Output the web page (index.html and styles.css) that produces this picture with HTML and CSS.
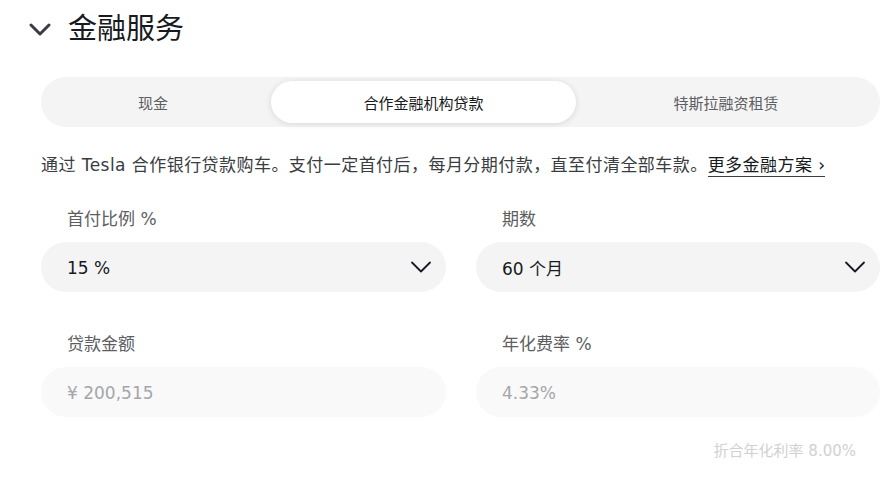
FILE: index.html
```html
<!DOCTYPE html>
<html lang="zh-CN">
<head>
<meta charset="utf-8">
<title>金融服务</title>
<link rel="stylesheet" href="styles.css">
</head>
<body>
<div class="page">
  <header class="head">
    <svg class="head-chev" width="22" height="13" viewBox="0 0 22 13"><path d="M2 2 L11 11 L20 2" fill="none" stroke="#393c41" stroke-width="3" stroke-linecap="round" stroke-linejoin="round"/></svg>
    <h1 class="title">金融服务</h1>
  </header>
  <div class="content">
    <div class="tabs">
      <div class="tab first">现金</div>
      <div class="tab active">合作金融机构贷款</div>
      <div class="tab">特斯拉融资租赁</div>
    </div>
    <p class="desc">通过 Tesla 合作银行贷款购车。支付一定首付后，每月分期付款，直至付清全部车款。<a class="more" href="#">更多金融方案 ›</a></p>
    <div class="grid">
      <div class="field">
        <div class="label">首付比例 %</div>
        <div class="select"><span class="val">15 %</span>
          <svg class="sel-chev" width="22" height="14" viewBox="0 0 22 14"><path d="M2 2.5 L11 11.5 L20 2.5" fill="none" stroke="#171a20" stroke-width="1.8" stroke-linecap="round" stroke-linejoin="round"/></svg>
        </div>
      </div>
      <div class="field">
        <div class="label">期数</div>
        <div class="select"><span class="val">60 个月</span>
          <svg class="sel-chev" width="22" height="14" viewBox="0 0 22 14"><path d="M2 2.5 L11 11.5 L20 2.5" fill="none" stroke="#171a20" stroke-width="1.8" stroke-linecap="round" stroke-linejoin="round"/></svg>
        </div>
      </div>
      <div class="field">
        <div class="label">贷款金额</div>
        <div class="input"><span class="ival">¥ 200,515</span></div>
      </div>
      <div class="field">
        <div class="label">年化费率 %</div>
        <div class="input"><span class="ival">4.33%</span></div>
      </div>
    </div>
    <div class="note">折合年化利率 8.00%</div>
  </div>
</div>
</body>
</html>
```
FILE: styles.css
```css
* { box-sizing: border-box; }
body {
  margin: 0;
  background: #ffffff;
  font-family: "DejaVu Sans", "Noto Sans CJK SC", sans-serif;
  font-weight: 400;
  color: #171a20;
}
.page { width: 891px; }
.head {
  display: flex;
  align-items: center;
  height: 58px;
  padding-left: 29px;
  gap: 17px;
}
.head-chev { display: block; margin-top: 1px; }
.title {
  margin: 0;
  font-size: 29px;
  font-weight: 400;
  color: #171a20;
  line-height: 1;
}
.content { padding: 0 11px 0 41px; }
.tabs {
  margin-top: 19px;
  height: 50px;
  background: #f4f4f4;
  border-radius: 25px;
  padding: 4px;
  display: grid;
  grid-template-columns: 226px 305px 1fr;
}
.tab {
  display: flex;
  align-items: center;
  justify-content: center;
  font-size: 15px;
  color: #5c5e62;
  border-radius: 21px;
}
.tab.first { padding-right: 10px; }
.tab.active {
  background: #ffffff;
  color: #171a20;
  box-shadow: 0 1px 6px rgba(0, 0, 0, 0.12);
}
.desc {
  margin: 26px 0 0;
  font-size: 17px;
  line-height: 24px;
  letter-spacing: 0.45px;
  color: #393c41;
  white-space: nowrap;
}
.more {
  color: #171a20;
  text-decoration: none;
  border-bottom: 1px solid #393c41;
  padding-bottom: 1px;
}
.grid {
  margin-top: 30px;
  display: grid;
  grid-template-columns: 405px 404px;
  column-gap: 30px;
  row-gap: 40px;
}
.label {
  font-size: 17px;
  line-height: 24px;
  color: #5c5e62;
  padding-left: 26px;
  margin-bottom: 11px;
}
.select {
  height: 50px;
  border-radius: 25px;
  background: #f4f4f5;
  display: flex;
  align-items: center;
  justify-content: space-between;
  padding: 0 14px 0 26px;
}
.val { font-size: 17px; color: #171a20; padding-top: 1px; }
.sel-chev { display: block; }
.input {
  height: 50px;
  border-radius: 25px;
  background: #f9f9fa;
  display: flex;
  align-items: center;
  padding: 0 26px;
}
.ival { font-size: 17px; color: #a5a6a8; padding-top: 1px; }
.note {
  margin-top: 24px;
  text-align: right;
  padding-right: 24px;
  font-size: 15px;
  line-height: 20px;
  color: #d0d1d2;
}
```
